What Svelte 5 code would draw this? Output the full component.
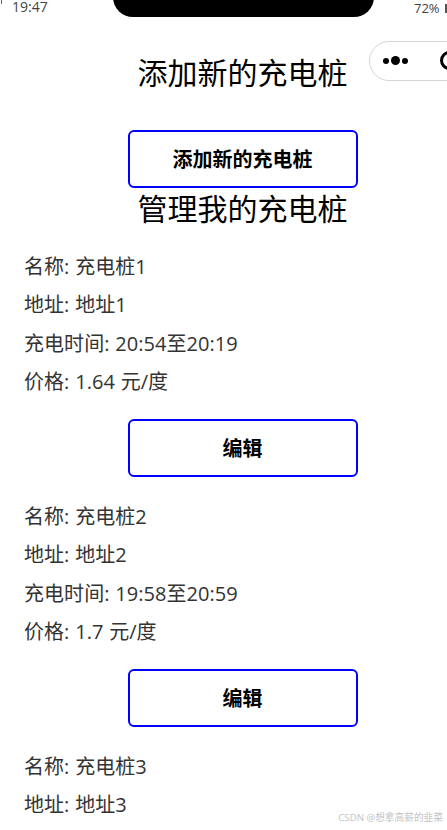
<script>
	const piles = [
		{ name: '充电桩1', address: '地址1', time: '20:54至20:19', price: '1.64' },
		{ name: '充电桩2', address: '地址2', time: '19:58至20:59', price: '1.7' },
		{ name: '充电桩3', address: '地址3', time: '', price: '' }
	];
</script>

<div class="screen">
	<div class="status">
		<span class="clock">19:47</span>
		<span class="notch"></span>
		<span class="battery">72%</span>
	</div>
	<div class="capsule" aria-hidden="true">
		<span class="dots"><i></i><b></b><i></i></span>
		<span class="ring"></span>
	</div>

	<main class="page">
		<h2>添加新的充电桩</h2>
		<button class="btn first">添加新的充电桩</button>
		<h2 class="manage">管理我的充电桩</h2>

		<div class="list">
			{#each piles as pile}
				<section class="pile">
					<p>名称: {pile.name}</p>
					<p>地址: {pile.address}</p>
					{#if pile.time}
						<p>充电时间: {pile.time}</p>
						<p>价格: {pile.price} 元/度</p>
						<button class="btn">编辑</button>
					{/if}
				</section>
			{/each}
		</div>
	</main>

	<span class="mark">CSDN @想拿高薪的韭菜</span>
</div>

<style>
	:global(body) {
		margin: 0;
		background: #fff;
	}

	.screen {
		position: relative;
		width: 447px;
		height: 830px;
		overflow: hidden;
		background: #fff;
		font-family: 'Open Sans', 'Noto Sans CJK SC', sans-serif;
		color: #000;
	}

	.status {
		height: 40px;
		color: #444;
	}

	.status::before {
		content: '';
		position: absolute;
		left: 1px;
		top: 0;
		width: 1px;
		height: 4px;
		background: #666;
	}

	.clock {
		position: absolute;
		left: 12px;
		top: 0;
		font-size: 14px;
		line-height: 14px;
	}

	.notch {
		position: absolute;
		left: 113px;
		top: -20px;
		width: 261px;
		height: 37px;
		background: #000;
		border-radius: 0 0 20px 20px;
	}

	.battery {
		position: absolute;
		left: 414px;
		top: 2px;
		font-size: 13px;
		line-height: 13px;
	}

	.battery::after {
		content: '';
		position: absolute;
		left: 31px;
		top: 2px;
		width: 2px;
		height: 9px;
		background: #555;
	}

	.capsule {
		position: absolute;
		left: 369px;
		top: 41px;
		width: 120px;
		height: 40px;
		box-sizing: border-box;
		border: 1px solid #d6d6d6;
		border-radius: 20px;
		background: #fff;
	}

	.dots {
		position: absolute;
		left: 13px;
		top: 14px;
		display: flex;
		align-items: center;
		gap: 2px;
	}

	.dots i {
		width: 6px;
		height: 6px;
		border-radius: 50%;
		background: #000;
	}

	.dots b {
		width: 9px;
		height: 9px;
		border-radius: 50%;
		background: #000;
	}

	.ring {
		position: absolute;
		left: 70px;
		top: 9px;
		width: 19px;
		height: 19px;
		box-sizing: border-box;
		border: 3px solid #000;
		border-radius: 50%;
	}

	.page {
		width: 485px;
		display: flex;
		flex-direction: column;
	}

	h2 {
		margin: 12px 0 0;
		height: 44px;
		line-height: 42px;
		font-size: 30px;
		font-weight: 400;
		text-align: center;
	}

	h2.manage {
		margin: 0;
	}

	.btn {
		display: block;
		box-sizing: border-box;
		width: 230px;
		height: 58px;
		margin: 0 auto;
		padding: 0 0 2px;
		border: 2px solid #00f;
		border-radius: 6px;
		background: #fff;
		color: #000;
		font: 700 20px 'Open Sans', 'Noto Sans CJK SC', sans-serif;
	}

	.btn.first {
		margin-top: 34px;
	}

	.list {
		padding-top: 15.5px;
	}

	.pile {
		display: flex;
		flex-direction: column;
		padding: 0 24px;
	}

	.pile p {
		margin: 0;
		height: 38.5px;
		line-height: 38.5px;
		font-size: 20px;
		letter-spacing: 0.05px;
		word-spacing: 0.5px;
		color: #333;
	}

	.pile .btn {
		margin-top: 17.5px;
		margin-bottom: 20.5px;
	}

	.mark {
		position: absolute;
		right: 4px;
		bottom: 6px;
		font-size: 9.7px;
		color: #c4c4c4;
	}
</style>
